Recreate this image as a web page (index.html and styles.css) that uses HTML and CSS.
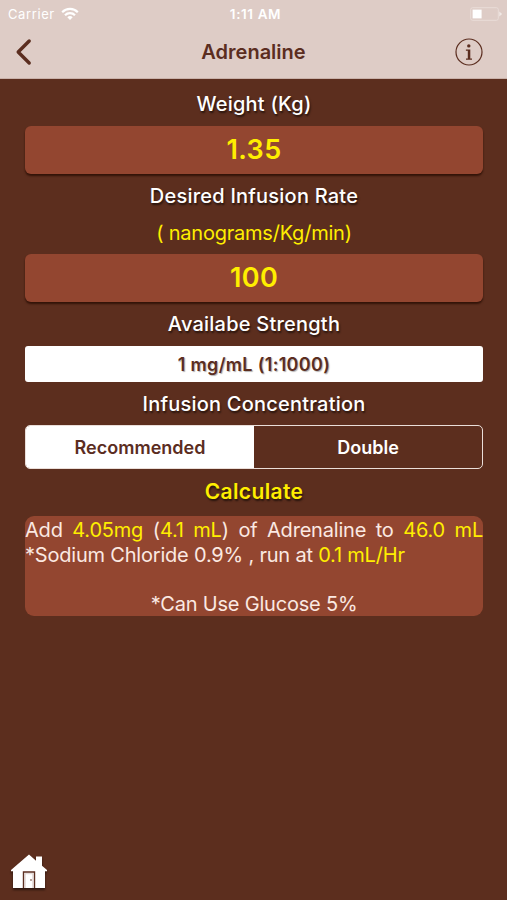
FILE: index.html
```
<!DOCTYPE html>
<html lang="en">
<head>
    <meta charset="UTF-8">
    <meta name="viewport" content="width=device-width, initial-scale=1.0">
    <title>Adrenaline</title>
    <link rel="stylesheet" href="styles.css">
</head>
<body>
    <!-- Header -->
    <header class="header">
        <div class="status-bar">
            <div class="carrier">
                <span>Carrier</span>
                <svg class="wifi" width="18" height="14" viewBox="0 0 18 14" fill="none" stroke="#fff" stroke-width="2.2">
                    <path d="M1.2 5.2a11 11 0 0 1 15.6 0M4 8.3a7 7 0 0 1 10 0"/>
                    <path d="M9 13l-2.7-2.8a3.9 3.9 0 0 1 5.4 0z" fill="#fff" stroke="none"/>
                </svg>
            </div>
            <span class="clock">1:11 AM</span>
            <svg class="battery" width="33" height="14" viewBox="0 0 33 14">
                <rect x=".7" y=".7" width="27.6" height="12.6" rx="2" fill="none" stroke="#e9dcd8" stroke-width="1"/>
                <rect x="2.6" y="2.6" width="9" height="8.8" fill="#fff"/>
                <path d="M29.3 4.5v5l2.8-2.5z" fill="#f1e9e6"/>
            </svg>
        </div>
        <div class="navbar">
            <svg class="back" width="18" height="28" viewBox="0 0 18 28" fill="none" stroke="#5b2d1f" stroke-width="3.4" stroke-linecap="round" stroke-linejoin="round">
                <path d="M14.2 3L3.2 14l11 11"/>
            </svg>
            <h1>Adrenaline</h1>
            <svg class="info" width="30" height="30" viewBox="0 0 30 30" fill="#5b2d1f">
                <circle cx="15" cy="15" r="13" fill="none" stroke="#5b2d1f" stroke-width="1.2"/>
                <circle cx="14.8" cy="8.9" r="1.7"/>
                <path d="M11.9 12.6h4.4v9h1.7v1.1h-6v-1.1h1.8v-7.8h-1.9z"/>
            </svg>
        </div>
    </header>

    <!-- Calculator -->
    <main class="container">
        <h2>Weight (Kg)</h2>
        <div class="field">1.35</div>
        <h2 class="rate">Desired Infusion Rate</h2>
        <p class="unit">( nanograms/Kg/min)</p>
        <div class="field">100</div>
        <h2 class="strength-title">Availabe Strength</h2>
        <div class="strength">1 mg/mL (1:1000)</div>
        <h2 class="concentration">Infusion Concentration</h2>
        <div class="segments">
            <div class="segment active">Recommended</div>
            <div class="segment">Double</div>
        </div>
        <div class="calculate">Calculate</div>
        <div class="result">
            <p>Add <b>4.05mg</b> (<b>4.1 mL</b>) of Adrenaline to <b>46.0 mL</b> <span class="run">*Sodium Chloride 0.9% , run at <b>0.1 mL/Hr</b></span></p>
            <p class="note">*Can Use Glucose 5%</p>
        </div>
    </main>

    <!-- Home -->
    <footer class="footer">
        <svg class="home" width="38" height="40" viewBox="0 0 38 40">
            <path d="M1 20L19 4.5l7 6.2V6.5h6v9.2L37 20v1.2h-2V38H3V21.2H1z" fill="#fff"/>
            <path d="M13.5 38V22h11v16" fill="#fff" stroke="#5b2d1f" stroke-width="1.4"/>
            <path d="M15.2 38V23.7h7.6V38" fill="none" stroke="#c9b6b0" stroke-width=".6"/>
            <circle cx="21" cy="30" r=".8" fill="#5b2d1f"/>
        </svg>
    </footer>
</body>
</html>
```
FILE: styles.css
```
/* General Styles */
* {
    box-sizing: border-box;
}
body {
    margin: 0;
    height: 900px;
    display: flex;
    flex-direction: column;
    background-color: #5c2e1e;
    color: #fff;
    font-family: Inter, "Liberation Sans", sans-serif;
    overflow: hidden;
}
h1, h2, p {
    margin: 0;
}

/* Header */
.header {
    height: 79px;
    background-color: #deccc6;
    border-bottom: 1px solid #c9b1a9;
}
.status-bar {
    display: grid;
    grid-template-columns: 1fr auto 1fr;
    align-items: center;
    height: 27px;
    padding: 0 4px 0 8px;
    font-size: 13px;
}
.carrier {
    display: flex;
    align-items: center;
    gap: 6px;
    letter-spacing: 0.6px;
}
.clock {
    font-size: 13.5px;
    font-weight: 600;
    letter-spacing: 0.6px;
}
.battery {
    justify-self: end;
}
.navbar {
    display: grid;
    grid-template-columns: 1fr auto 1fr;
    align-items: center;
    height: 50px;
    padding: 0 23px 0 15px;
}
h1 {
    padding-left: 8px;
    font-size: 20px;
    font-weight: 600;
    color: #5b2d1f;
}
.info {
    justify-self: end;
}

/* Calculator */
.container {
    flex: 1;
    padding: 0 24px 0 25px;
    text-align: center;
}
h2 {
    height: 47px;
    line-height: 50px;
    font-size: 20px;
    font-weight: 500;
    letter-spacing: 0.22px;
    text-shadow: 1px 2px 2px rgba(0, 0, 0, 0.6);
}
.field {
    height: 48px;
    line-height: 47px;
    border-radius: 6px;
    background-color: #934630;
    box-shadow: 0 2px 2px rgba(40, 12, 3, 0.8);
    color: #ffee00;
    font-size: 27px;
    font-weight: 600;
    letter-spacing: 0.4px;
}
.rate {
    height: 44px;
    line-height: 44px;
}
.unit {
    height: 36px;
    line-height: 30px;
    font-size: 20px;
    letter-spacing: -0.22px;
    color: #ffee00;
}
.strength-title {
    height: 44px;
    line-height: 45px;
}
.strength {
    height: 36px;
    line-height: 37px;
    border-radius: 3px;
    background-color: #fff;
    color: #5b2d1f;
    font-size: 18px;
    font-weight: 600;
    letter-spacing: 0.32px;
    text-shadow: 1px 1px 1px rgba(0, 0, 0, 0.3);
}
.concentration {
    height: 43px;
    line-height: 44px;
}
.segments {
    display: flex;
    height: 44px;
    border: 1.5px solid #eaded9;
    border-radius: 5px;
    overflow: hidden;
}
.segment {
    flex: 1;
    line-height: 43px;
    font-size: 18px;
    font-weight: 600;
}
.active {
    background-color: #fff;
    color: #5b2d1f;
}
.calculate {
    height: 47px;
    line-height: 46px;
    color: #ffee00;
    font-size: 21px;
    font-weight: 600;
    letter-spacing: 0.35px;
    text-shadow: 1px 2px 2px rgba(0, 0, 0, 0.6);
}
.result {
    height: 100px;
    padding-top: 2px;
    border-radius: 9px;
    background-color: #934630;
    color: #fbe9e2;
    font-size: 20px;
    line-height: 24.5px;
    letter-spacing: -0.2px;
    text-align: justify;
}
.result b {
    font-weight: 400;
    color: #ffee00;
}
.note {
    margin-top: 24.5px;
    text-align: center;
}

/* Footer */
.footer {
    height: 50px;
    padding-left: 10px;
}
.home {
    filter: drop-shadow(0 2px 1px rgba(0, 0, 0, 0.5));
}
```
